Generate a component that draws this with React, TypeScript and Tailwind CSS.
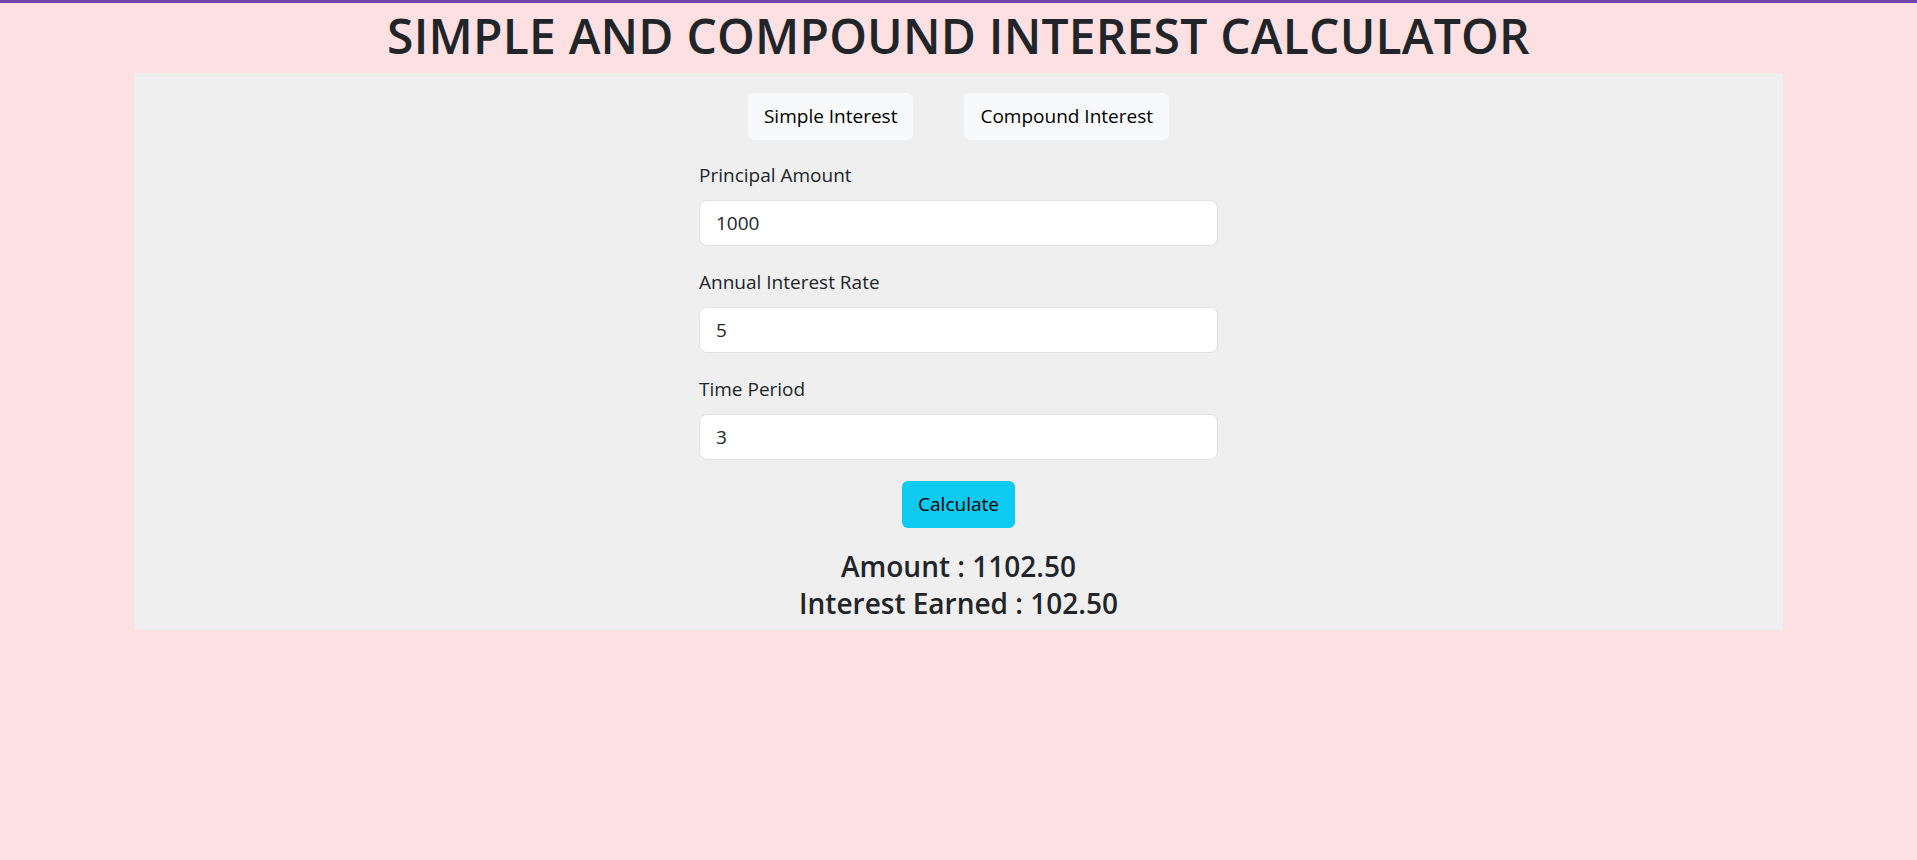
import { useState } from "react"

export default function App() {
  const [mode, setMode] = useState<"simple" | "compound">("simple")
  const [principal, setPrincipal] = useState("1000")
  const [rate, setRate] = useState("5")
  const [time, setTime] = useState("3")

  return (
    <div className="min-h-[860px] bg-[#fde0e1] text-[#212529] font-['Open_Sans',sans-serif]">
      {/* top accent line */}
      <div className="h-[3px] bg-[#7046aa]" />

      <h1 className="text-center text-[48px] leading-[62px] font-semibold tracking-[0.2px] pt-[2px] pb-[6px]">
        SIMPLE AND COMPOUND INTEREST CALCULATOR
      </h1>

      {/* Calculator card */}
      <div className="mx-[134px] bg-[#efefef]">
        <div className="pt-[20px] pb-[9px] flex flex-col items-center">
          {/* Mode switch */}
          <div className="flex gap-[51px]">
            <button
              onClick={() => setMode("simple")}
              className="h-[47px] px-4 rounded-[6px] bg-[#f8f9fa] text-black text-[19px]"
            >
              Simple Interest
            </button>
            <button
              onClick={() => setMode("compound")}
              className="h-[47px] px-4 rounded-[6px] bg-[#f8f9fa] text-black text-[19px]"
            >
              Compound Interest
            </button>
          </div>

          {/* Form */}
          <div className="w-[519px] mt-[20px] flex flex-col gap-[21px]">
            <div className="flex flex-col gap-[10px]">
              <label className="text-[19px] leading-[30px]">Principal Amount</label>
              <input
                value={principal}
                onChange={(e) => setPrincipal(e.target.value)}
                className="h-[46px] px-4 bg-white border border-[#dee2e6] rounded-lg text-[19px] outline-none"
              />
            </div>
            <div className="flex flex-col gap-[10px]">
              <label className="text-[19px] leading-[30px]">Annual Interest Rate</label>
              <input
                value={rate}
                onChange={(e) => setRate(e.target.value)}
                className="h-[46px] px-4 bg-white border border-[#dee2e6] rounded-lg text-[19px] outline-none"
              />
            </div>
            <div className="flex flex-col gap-[10px]">
              <label className="text-[19px] leading-[30px]">Time Period</label>
              <input
                value={time}
                onChange={(e) => setTime(e.target.value)}
                className="h-[46px] px-4 bg-white border border-[#dee2e6] rounded-lg text-[19px] outline-none"
              />
            </div>
          </div>

          <button className="mt-[21px] h-[47px] w-[113px] rounded-[6px] bg-[#0dcaf0] text-black text-[19px]">
            Calculate
          </button>

          {/* Results */}
          <div className="mt-[20px] text-center text-[28px] leading-[36.7px] font-semibold" data-mode={mode}>
            <div>Amount : 1102.50</div>
            <div>Interest Earned : 102.50</div>
          </div>
        </div>
      </div>
    </div>
  )
}
